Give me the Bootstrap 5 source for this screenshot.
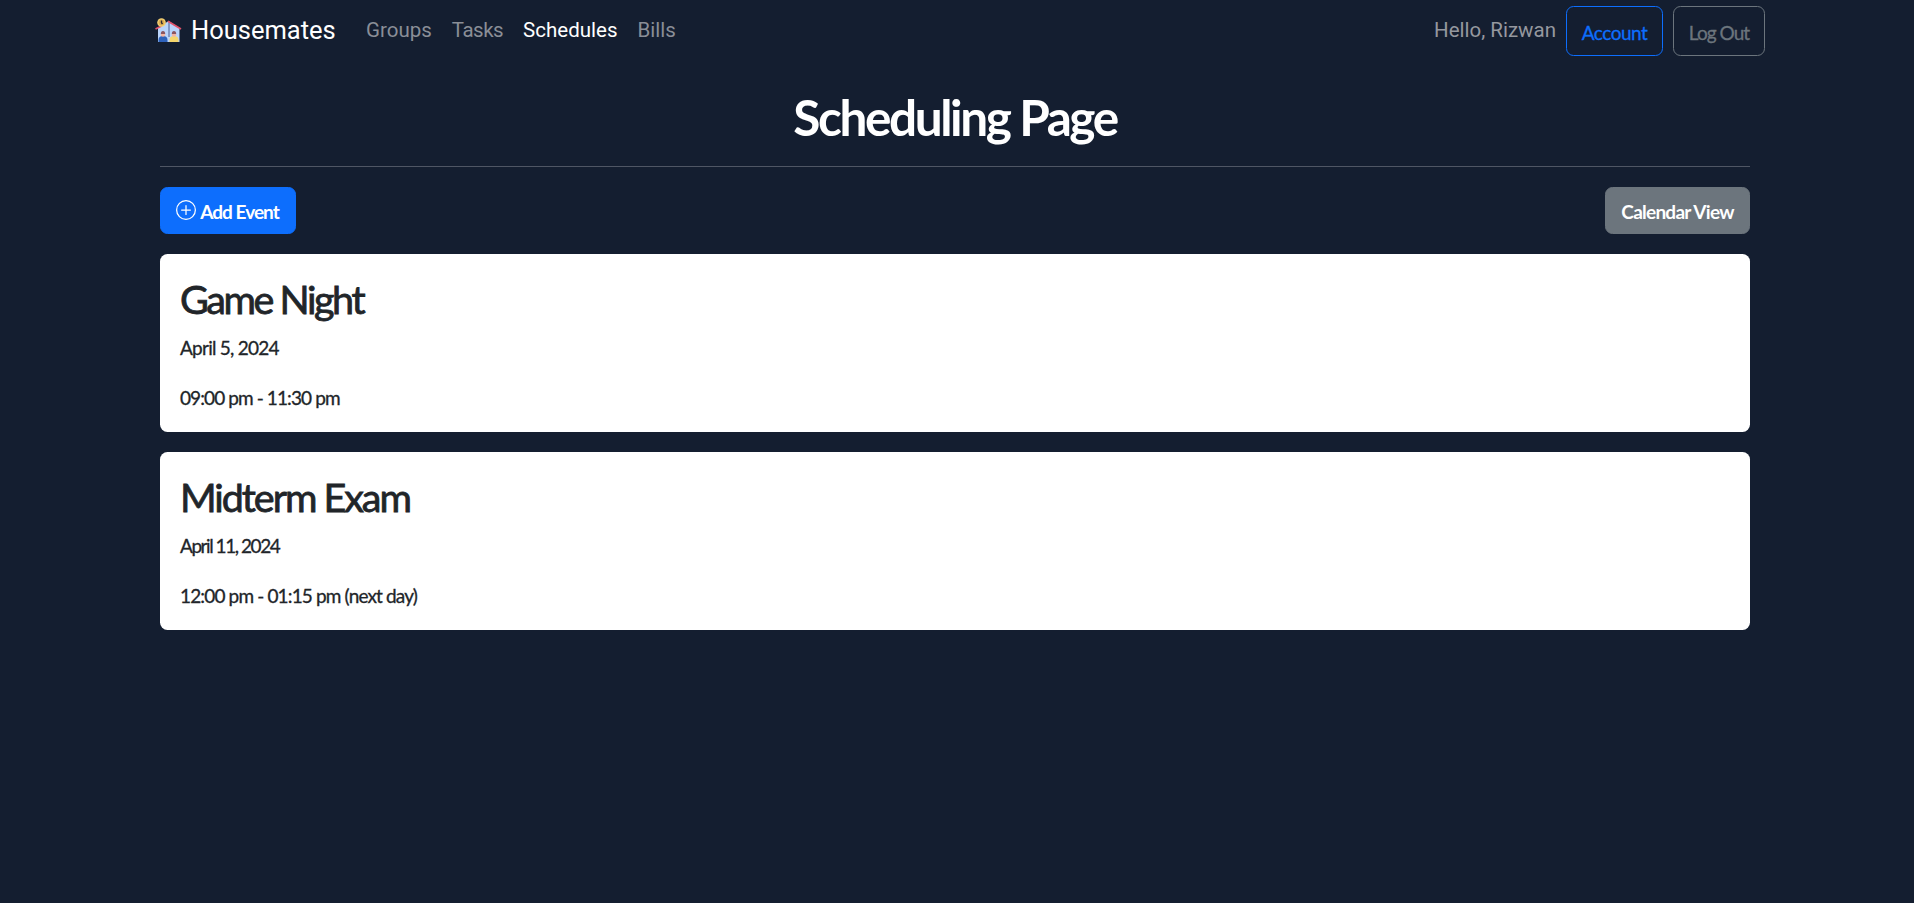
<!DOCTYPE html>
<html lang="en">
<head>
<meta charset="utf-8">
<meta name="viewport" content="width=device-width, initial-scale=1">
<title>Housemates</title>
<link href="https://cdn.jsdelivr.net/npm/bootstrap@5.3.0/dist/css/bootstrap.min.css" rel="stylesheet">
<style>
:root { font-size: 20px; }
body { background: #141e30; font-family: "Lato", "Open Sans", sans-serif; }
.site-nav { width: 1616px; height: 62px; font-family: "Roboto", "Open Sans", sans-serif; font-size: 20.5px; --bs-navbar-padding-y: 0; }
.site-nav .navbar-brand { font-size: 25.5px; line-height: 30px; width: 189px; margin: 0 12px 2px 6px; }
.site-nav .navbar-nav { margin-bottom: 2px; }
.site-nav .nav-link { color: #8a8e97; }
.site-nav .nav-link.active { color: #fff; }
.greeting { color: #95989f; margin-bottom: 2px; }
.btn { font-size: 19px; line-height: 30px; padding: 8.5px 0 6.5px; font-family: "Lato", sans-serif; white-space: nowrap; }
.site-nav .btn { height: 50px; padding: 11px 0 7px; -webkit-text-stroke: .3px; }
.btn-account { width: 97px; letter-spacing: -.5px; }
.btn-logout { width: 92px; letter-spacing: -.95px; }
.page { width: 1590px; margin-left: 160px; padding-top: 25px; }
.page h1 { font-size: 49.5px; line-height: 60px; font-weight: 700; letter-spacing: -2.4px; margin-bottom: 19px; }
.page hr { margin: 0 0 20px; color: #fff; opacity: .25; }
.btn-add { width: 136px; height: 47px; letter-spacing: -.95px; }
.btn-cal { width: 145px; height: 47px; letter-spacing: -.75px; }
.event { height: 178px; padding: 21px 20px 0; border: 0; border-radius: 7.5px; color: #212529; font-size: 19px; line-height: 30px; -webkit-text-stroke: .3px; }
.event h2 { font-size: 39.5px; line-height: 48px; margin-bottom: 10px; font-weight: 400; -webkit-text-stroke: .8px; }
.event p { margin-bottom: 20px; }
</style>
</head>
<body>
<nav class="navbar navbar-expand site-nav mx-auto">
  <a class="navbar-brand d-flex align-items-center text-white p-0" href="#">
    <svg class="flex-shrink-0" width="27" height="24" viewBox="0 0 26 24" style="margin-right:9px">
      <path d="M2.5 10 13 3l11 7v14H2.5z" fill="#b9d4fb"/>
      <path d="M12.5 4v15h2V5z" fill="#8298c6"/>
      <path d="M0 11 6 8M12.5 3.2 25.5 11" stroke="#e0526a" stroke-width="1.8" fill="none"/>
      <circle cx="6" cy="4.5" r="4.3" fill="#f2cf72"/>
      <circle cx="6" cy="4.5" r="2.9" fill="#dfae51"/>
      <path d="M6 2.6v2.2l1 1.2" stroke="#2c2934" stroke-width="1.4" fill="none"/>
      <path d="M3 24v-2q0-4 4.5-4t4.5 4v2z" fill="#2e62bb"/>
      <path d="M14 24v-2q0-4 4.5-4t4.5 4v2z" fill="#f5d66c"/>
      <circle cx="7.5" cy="16.5" r="2.2" fill="#f3b4a0"/>
      <circle cx="18.5" cy="16.5" r="2.2" fill="#f3b4a0"/>
      <path d="M5.3 16q0-3 2.2-3t2.2 3zM16.3 16q0-3 2.2-3t2.2 3z" fill="#8b5661"/>
    </svg>Housemates
  </a>
  <div class="navbar-nav me-auto">
    <a class="nav-link" href="#">Groups</a>
    <a class="nav-link" href="#" style="letter-spacing:-.5px">Tasks</a>
    <a class="nav-link active" href="#">Schedules</a>
    <a class="nav-link" href="#">Bills</a>
  </div>
  <div class="d-flex align-items-center gap-2">
    <span class="greeting">Hello, Rizwan</span>
    <a class="btn btn-outline-primary btn-account" href="#">Account</a>
    <a class="btn btn-outline-secondary btn-logout" href="#">Log Out</a>
  </div>
</nav>
<main class="page">
  <h1 class="text-center text-white">Scheduling Page</h1>
  <hr>
  <div class="d-flex justify-content-between mb-3">
    <button class="btn btn-primary btn-add fw-bold d-flex align-items-center justify-content-center">
      <svg width="20" height="20" viewBox="0 0 16 16" fill="currentColor" style="margin:-3px 4px 0 -1px"><path d="M8 15A7 7 0 1 1 8 1a7 7 0 0 1 0 14m0 1A8 8 0 1 0 8 0a8 8 0 0 0 0 16"/><path d="M8 4a.5.5 0 0 1 .5.5v3h3a.5.5 0 0 1 0 1h-3v3a.5.5 0 0 1-1 0v-3h-3a.5.5 0 0 1 0-1h3v-3A.5.5 0 0 1 8 4"/></svg>Add Event
    </button>
    <button class="btn btn-secondary btn-cal fw-bold">Calendar View</button>
  </div>
  <section class="card event mb-3">
    <h2 style="letter-spacing:-2.45px">Game Night</h2>
    <p style="letter-spacing:-.75px">April 5, 2024</p>
    <p style="letter-spacing:-.9px">09:00 pm - 11:30 pm</p>
  </section>
  <section class="card event">
    <h2 style="letter-spacing:-2.05px">Midterm Exam</h2>
    <p style="letter-spacing:-1.45px">April 11, 2024</p>
    <p style="letter-spacing:-.85px">12:00 pm - 01:15 pm (next day)</p>
  </section>
</main>
<script src="https://cdn.jsdelivr.net/npm/bootstrap@5.3.0/dist/js/bootstrap.bundle.min.js"></script>
</body>
</html>
